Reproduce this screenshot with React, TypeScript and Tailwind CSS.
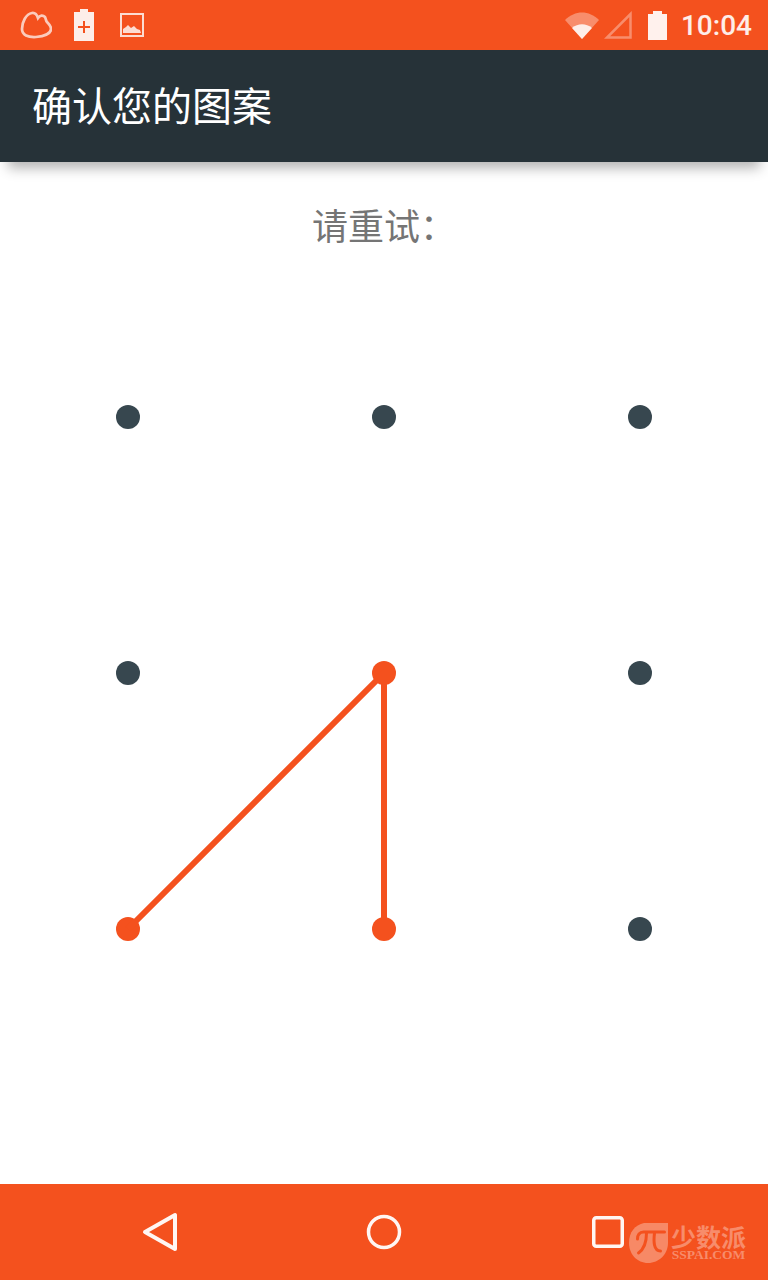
const cjk = "font-['Roboto','Noto_Sans_CJK_SC',sans-serif]";

// Pattern cells, numbered left to right and top to bottom.
const hitCells = [4, 6, 7];

function StatusIcons() {
  return (
    <div className="flex items-center gap-[22px] pl-[20px]">
      <svg width="32" height="28" viewBox="0 0 32 28" className="opacity-70">
        <path
          d="M2 18C2 11 6 3 12 2c3-.5 5 2 6 5 2-3 5-3 7-1 1 2 1 4 2 5 2 2 4 4 4 7 0 4-6 7-15 8-8 .5-14-2-14-8z"
          fill="none"
          stroke="#fff"
          strokeWidth="2.750"
        />
      </svg>
      <svg width="20" height="32" viewBox="0 0 20 32" className="opacity-90">
        <path
          fillRule="evenodd"
          fill="#fff"
          d="M6 0h8v3h6v29H0V3h6zM9 12v5H4v2h5v5h2v-5h5v-2h-5v-5z"
        />
      </svg>
      <svg width="24" height="24" viewBox="0 0 24 24" className="ml-[4px] opacity-80">
        <rect x="1" y="1" width="22" height="22" fill="none" stroke="#fff" strokeWidth="2" />
        <path d="M3 20v-4l3-2 2-2 3 3 3-2 3 3 3 1 1 3z" fill="#fff" />
      </svg>
    </div>
  );
}

function StatusRight() {
  return (
    <div className="flex items-center pr-[16px]">
      <svg width="36" height="28" viewBox="0 0 36 28" className="mr-[4px]">
        <path d="M1 9C11-1 25-1 35 9L18 28z" fill="#fff" fillOpacity="0.35" />
        <path d="M8 17c6-5 14-5 20 0L18 28z" fill="#fff" fillOpacity="0.85" />
      </svg>
      <svg width="28" height="28" viewBox="0 0 28 28" className="mr-[16px]">
        <path d="M26.5 3v23.500H3z" fill="none" stroke="#fff" strokeOpacity="0.35" strokeWidth="2.500" />
      </svg>
      <svg width="19" height="29" viewBox="0 0 19 29" className="mr-[14px]">
        <path d="M5 0h9v3h5v26H0V3h5z" fill="#fff" fillOpacity="0.92" />
      </svg>
      <span className="pt-[2px] font-['Roboto',sans-serif] text-[28px] font-medium leading-none text-white/90">10:04</span>
    </div>
  );
}

function PatternDot({ hit }: { hit: boolean }) {
  return (
    <div className="flex h-[256px] w-[256px] items-center justify-center">
      <div className={hit ? "h-[24px] w-[24px] rounded-full bg-[#f4511e]" : "h-[24px] w-[24px] rounded-full bg-[#37474f]"} />
    </div>
  );
}

function NavBar() {
  return (
    <div className="relative flex h-[96px] shrink-0 items-center justify-center bg-[#f4511e]">
      <div className="flex">
        <div className="flex w-[224px] justify-center">
          <svg width="36" height="40" viewBox="0 0 36 40">
            <path d="M33 3v34L3 20z" fill="none" stroke="#fff" strokeOpacity="0.95" strokeWidth="4" strokeLinejoin="round" />
          </svg>
        </div>
        <div className="flex w-[224px] items-center justify-center">
          <svg width="36" height="36" viewBox="0 0 36 36">
            <circle cx="18" cy="18" r="15.500" fill="none" stroke="#fff" strokeOpacity="0.95" strokeWidth="3.500" />
          </svg>
        </div>
        <div className="flex w-[224px] items-center justify-center">
          <svg width="32" height="32" viewBox="0 0 32 32">
            <rect x="1.750" y="1.750" width="28.500" height="28.500" rx="2.500" fill="none" stroke="#fff" strokeOpacity="0.95" strokeWidth="3.500" />
          </svg>
        </div>
      </div>
      {/* sspai watermark */}
      <div className="absolute left-[629px] top-[39px] flex items-start gap-[3px]">
        <svg width="39" height="40" viewBox="0 0 39 40">
          <path d="M15 0h24v20c0 11-9 20-20 20S0 31 0 20C0 9 6 2 15 0z" fill="#fff" fillOpacity="0.32" />
          <path
            d="M8.500 16c0-4 2-7 6-7h21M17.500 10c0 7-1 15-8 20M25.500 10c-1 8-1 18 6 18"
            fill="none"
            stroke="#f4511e"
            strokeWidth="3"
            strokeLinecap="round"
          />
        </svg>
        <div className="flex flex-col items-center">
          <span className="font-['Noto_Sans_CJK_SC',sans-serif] text-[25px] font-bold leading-[26px] text-white/35">少数派</span>
          <span className="font-['Liberation_Serif',serif] text-[13.500px] font-bold leading-[12px] text-white/35">SSPAI.COM</span>
        </div>
      </div>
    </div>
  );
}

export default function App() {
  return (
    <div className={`flex h-[1280px] w-[768px] flex-col overflow-hidden bg-white ${cjk}`}>
      <div className="flex h-[50px] shrink-0 items-center justify-between bg-[#f4511e]">
        <StatusIcons />
        <StatusRight />
      </div>
      <div className="z-10 flex h-[112px] shrink-0 items-center bg-[#263238] pl-[32px] pt-[3px] shadow-[0_14px_12px_-8px_rgba(0,0,0,0.3)]">
        <h1 className="text-[40px] font-normal leading-none text-white">确认您的图案</h1>
      </div>
      <div className="flex flex-1 flex-col items-center">
        <p className="mt-[43px] h-[84px] text-[36px] leading-[46px] text-[#757575]">请重试：</p>
        <div className="relative grid grid-cols-3">
          {Array.from({ length: 9 }, (_, i) => (
            <PatternDot key={i} hit={hitCells.includes(i)} />
          ))}
          <svg width="768" height="768" viewBox="0 0 768 768" className="absolute left-0 top-0">
            <path d="M128 640L384 384V640" fill="none" stroke="#f4511e" strokeWidth="6" />
          </svg>
        </div>
      </div>
      <NavBar />
    </div>
  );
}
